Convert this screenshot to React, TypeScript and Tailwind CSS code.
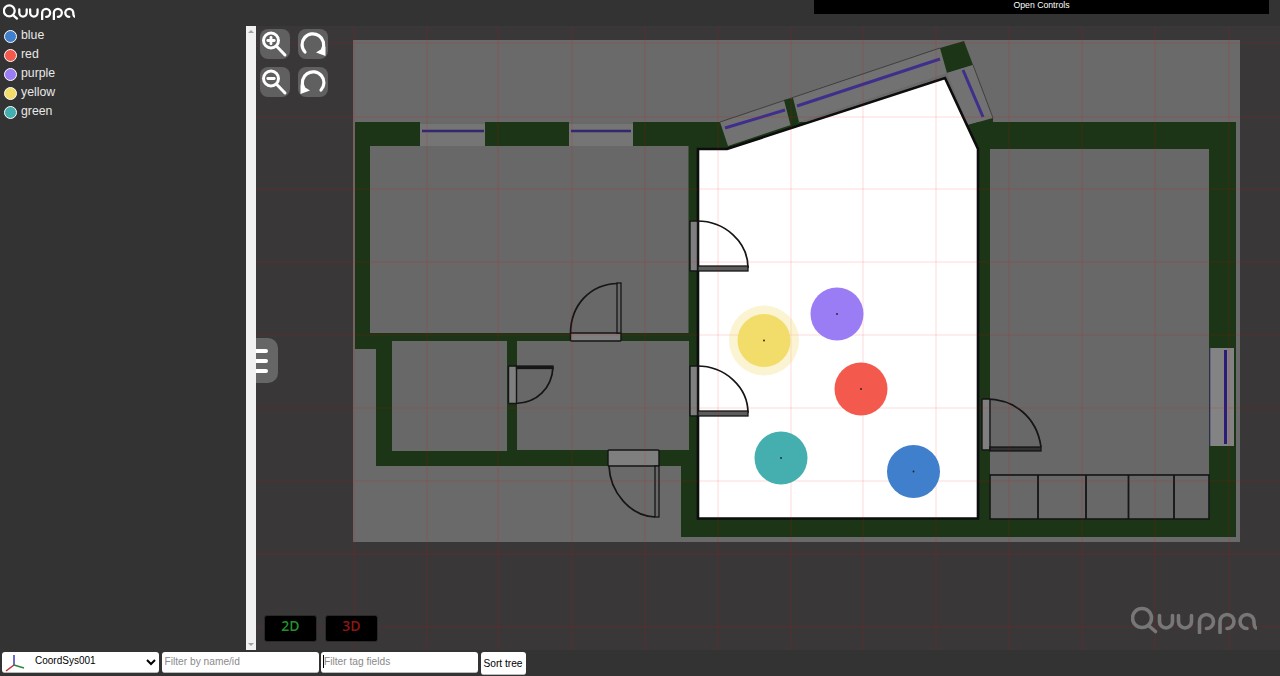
import React from "react";

const SANS = "font-['Liberation_Sans',Arial,sans-serif]";

const tags = [
  { name: "blue", legend: "bg-[#3f7fcb]" },
  { name: "red", legend: "bg-[#f4594e]" },
  { name: "purple", legend: "bg-[#9a7cf5]" },
  { name: "yellow", legend: "bg-[#f2dc6a]" },
  { name: "green", legend: "bg-[#45aeae]" },
];

function Logo({ className, color, weight }: { className: string; color: string; weight: number }) {
  return (
    <svg viewBox="0 0 126 28" className={className} fill="none" stroke={color} strokeWidth={weight} strokeLinecap="round">
      <circle cx="11" cy="12" r="9.500" />
      <path d="M17.500 19.500L24.500 25.500" />
      <path d="M28.500 9.500V15.500a6.500 6.500 0 0 0 13 0V9.500" />
      <path d="M47.500 9.500V15.500a6.500 6.500 0 0 0 13 0V9.500" />
      <path d="M68.500 26.500V15.500a7 7 0 1 1 7 7" />
      <path d="M89 26.500V15.500a7 7 0 1 1 7 7" />
      <path d="M116 22.500a7 7 0 1 1 7-7q0 5.500 2 6.500" />
    </svg>
  );
}

function ZoomIcon({ plus }: { plus: boolean }) {
  return (
    <svg viewBox="0 0 30 30" className="w-[30px] h-[30px]" fill="none" stroke="white" strokeLinecap="round">
      <circle cx="11" cy="11.500" r="7.500" strokeWidth="3" />
      <path d="M16.800 17.500L25 26" strokeWidth="3" />
      <path d="M7.800 11.500H14.200" strokeWidth="2.800" />
      {plus && <path d="M11 8.300V14.700" strokeWidth="2.800" />}
    </svg>
  );
}

function RotateIcon({ flip }: { flip: boolean }) {
  return (
    <svg viewBox="0 0 30 30" className={`w-[30px] h-[30px] ${flip ? "-scale-x-100" : ""}`} fill="none" stroke="white" strokeWidth="3.200" strokeLinecap="round">
      <path d="M7 23A10.800 10.800 0 1 1 24.500 20.500" />
      <path d="M18 23.500L27.500 27L27.500 17.500Z" fill="white" stroke="none" />
    </svg>
  );
}

function Door({ frame, leaf, arc, leafFill }: { frame: number[]; leaf: number[]; arc: string; leafFill?: string }) {
  return (
    <g>
      <path d={arc} fill="none" stroke="#141414" strokeWidth="1.700" />
      <rect x={frame[0]} y={frame[1]} width={frame[2]} height={frame[3]} rx="1" fill="#7f7f7f" stroke="#141414" strokeWidth="1.400" />
      <rect x={leaf[0]} y={leaf[1]} width={leaf[2]} height={leaf[3]} fill={leafFill ?? "#5c5c5c"} stroke="#141414" strokeWidth="1.300" />
    </g>
  );
}

function FloorPlan() {
  const vertical = [354, 427, 498, 572, 645, 718, 791, 863, 936, 1009, 1082, 1155, 1229];
  const horizontal = [43, 117, 189, 262, 335, 408, 481, 554, 627];
  const GREEN = "#1a3616";
  const GRAY = "#686868";
  const dots = [
    { cx: 913.5, cy: 471.5, fill: "#3f7fcb" },
    { cx: 861, cy: 389, fill: "#f4594e" },
    { cx: 837, cy: 314, fill: "#9a7cf5" },
    { cx: 781, cy: 458, fill: "#45aeae" },
  ];
  return (
    <svg viewBox="256 26 1024 624" className="absolute inset-0 w-full h-full">
      <defs>
        <filter id="soft" x="-2%" y="-2%" width="104%" height="104%">
          <feGaussianBlur stdDeviation="0.45" />
        </filter>
      </defs>
      <g filter="url(#soft)">
        <rect x="353" y="40" width="887" height="502" fill="#6a6a6a" />
        <path d="M355 122H1236V537H681V466H376V349H355Z" fill={GREEN} />
        <rect x="370" y="146" width="318.500" height="187" fill={GRAY} />
        <rect x="392" y="341" width="115" height="110" fill={GRAY} />
        <rect x="517" y="341" width="172" height="109" fill={GRAY} />
        <rect x="990" y="149" width="219" height="370" fill={GRAY} />

        <rect x="420" y="122" width="65" height="24" fill="#747474" />
        <rect x="569" y="122" width="64" height="24" fill="#747474" />
        <path d="M422 131H484M571 131H631" stroke="#35256f" strokeWidth="2.400" />
        <path d="M420 123H485M569 123H633" stroke="#555" strokeWidth="0.800" />

        <path d="M720 122L940 48L947 73L728 146Z" fill="#727272" />
        <path d="M720 122L940 48" stroke="#333" strokeWidth="0.800" />
        <path d="M725 128L785 110M797 106L940 59" stroke="#3f2f8c" strokeWidth="3" />
        <path d="M784 100L793 98L799 122L791 127Z" fill={GREEN} />
        <path d="M940 48L964 41L973 65L947 73Z" fill={GREEN} />
        <path d="M947 73L973 65L993 118L968 125Z" fill="#727272" />
        <path d="M973 65L993 118" stroke="#333" strokeWidth="0.800" />
        <path d="M963 70L983 117" stroke="#3f2f8c" strokeWidth="3" />
        <path d="M968 125L993 118V149H978Z" fill={GREEN} />

        <path d="M698 149H727L945 78L978 149V518.500H698Z" fill="white" stroke="#0a0a0a" strokeWidth="2.600" />

        <Door frame={[690, 221, 7.500, 50]} leaf={[698, 266, 50, 5]} arc="M697 221A51 47 0 0 1 748 268" />
        <Door frame={[690, 366, 7.500, 50]} leaf={[698, 411, 50, 5]} arc="M697 366A51 47 0 0 1 748 413" />
        <Door frame={[570.500, 333, 50.500, 8]} leaf={[617, 283, 4, 50]} arc="M618 283.500C590 284 571 305 570.500 333" leafFill="#686868" />
        <Door frame={[508.500, 366, 8, 37.500]} leaf={[516.500, 366, 36.500, 2.500]} arc="M553 367C552 388 537 403 516 403.500" leafFill="#1a1a1a" />
        <Door frame={[608, 450, 51, 16]} leaf={[655, 466, 4, 51]} arc="M609 466C610 492 630 516 655 517" leafFill="#686868" />
        <Door frame={[982, 399, 8, 51]} leaf={[990, 447, 51, 4]} arc="M983 399C1015 398 1037 418 1041 447" leafFill="#333333" />

        <rect x="1210" y="348" width="24" height="98" fill="#838383" />
        <path d="M1210 348V446" stroke="#3f2f8c" strokeWidth="0.700" />
        <path d="M1225.500 350V444" stroke="#2a1f78" strokeWidth="3" />

        <rect x="990" y="475" width="219" height="44" fill={GRAY} stroke="#141414" strokeWidth="1.600" />
        <path d="M1038 475V519M1086 475V519M1128.500 475V519M1174 475V519" stroke="#141414" strokeWidth="1.800" />
      </g>

      {vertical.map((x) => (
        <line key={x} x1={x} x2={x} y1="26" y2="650" stroke="#ff0000" strokeOpacity="0.14" />
      ))}
      {horizontal.map((y) => (
        <line key={y} x1="256" x2="1280" y1={y} y2={y} stroke="#ff0000" strokeOpacity="0.14" />
      ))}

      <circle cx="764" cy="340.500" r="35" fill="#f2dc6a" fillOpacity="0.3" />
      <circle cx="764" cy="340.500" r="26.500" fill="#f2dc6a" />
      <circle cx="764" cy="340.500" r="0.900" fill="#222" />
      {dots.map((d) => (
        <g key={d.cx}>
          <circle cx={d.cx} cy={d.cy} r="26.500" fill={d.fill} />
          <circle cx={d.cx} cy={d.cy} r="0.900" fill="#222" />
        </g>
      ))}
    </svg>
  );
}

export default function App() {
  return (
    <div className={`h-screen w-screen overflow-hidden flex flex-col bg-[#333333] ${SANS}`}>
      <header className="h-[26px] shrink-0 flex items-start">
        <div className="pl-[3px] pt-[4px]">
          <Logo className="block w-[72px] h-[16px]" color="white" weight={4} />
        </div>
        <div className="ml-auto mr-[11px] w-[455px] h-[14px] bg-black text-white text-[8.700px] leading-[11px] text-center">Open Controls</div>
      </header>

      <div className="flex flex-1 min-h-0">
        <aside className="w-[246px] shrink-0 pl-[4px] pt-[1px]">
          <ul className="flex flex-col">
            {tags.map((t) => (
              <li key={t.name} className="h-[19px] flex items-center gap-[4px]">
                <span className={`w-[13px] h-[13px] rounded-full border border-white ${t.legend}`} />
                <span className="text-[12.300px] text-[#e8e8e8] leading-none mb-[2px]">{t.name}</span>
              </li>
            ))}
          </ul>
        </aside>

        <div className="w-[10px] shrink-0 bg-[#f1f1f1] flex flex-col justify-between items-center py-[4px]">
          <span className="w-0 h-0 border-x-[3px] border-x-transparent border-b-[3px] border-b-[#a0a0a0]" />
          <span className="w-0 h-0 border-x-[3px] border-x-transparent border-t-[3px] border-t-[#a0a0a0]" />
        </div>

        <main className="relative flex-1 bg-[#3a3738]">
          <FloorPlan />

          <div className="absolute left-[4px] top-[3px] grid grid-cols-2 gap-x-[8px] gap-y-[8px]">
            <button className="w-[30px] h-[30px] rounded-lg bg-[#606060]"><ZoomIcon plus /></button>
            <button className="w-[30px] h-[30px] rounded-lg bg-[#606060]"><RotateIcon flip={false} /></button>
            <button className="w-[30px] h-[30px] rounded-lg bg-[#606060]"><ZoomIcon plus={false} /></button>
            <button className="w-[30px] h-[30px] rounded-lg bg-[#606060]"><RotateIcon flip /></button>
          </div>

          <div className="absolute left-0 top-[312px] w-[22px] h-[45px] rounded-r-[10px] bg-[#666666] flex flex-col justify-center gap-[6px]">
            <span className="block w-[12px] h-[4px] bg-white rounded-r-sm" />
            <span className="block w-[12px] h-[4px] bg-white rounded-r-sm" />
            <span className="block w-[12px] h-[4px] bg-white rounded-r-sm" />
          </div>

          <div className="absolute left-[8px] top-[589px] flex gap-[8px]">
            <div className="w-[53px] h-[27px] rounded-[3px] bg-black border border-[#2a2a2a] text-[#22922a] text-[14px] font-semibold leading-[19px] text-center font-['Open_Sans',sans-serif]">2D</div>
            <div className="w-[53px] h-[27px] rounded-[3px] bg-black border border-[#2a2a2a] text-[#8e1616] text-[14px] font-semibold leading-[19px] text-center font-['Open_Sans',sans-serif]">3D</div>
          </div>

          <Logo className="absolute left-[875px] top-[580px] w-[126px] h-[28px]" color="#777777" weight={3.6} />
        </main>
      </div>

      <footer className="h-[26px] shrink-0 flex items-start gap-[2.500px] pl-[2px] pt-[2px]">
        <div className="relative w-[157px] h-[21px]">
          <select defaultValue="CoordSys001" className="block w-full h-full bg-white rounded-[3px] pl-[29px] pb-[3px] text-[10px] text-black border-b border-[#bbbbbb]">
            <option>CoordSys001</option>
          </select>
          <svg viewBox="0 0 20 18" className="absolute left-[3px] top-[2px] w-[20px] h-[18px]" fill="none" strokeWidth="1.500">
            <path d="M9 11V1" stroke="#3a3ac0" />
            <path d="M9 11L19 14" stroke="#2a8a3a" />
            <path d="M9 11L1 17" stroke="#c03030" />
          </svg>
        </div>
        <input placeholder="Filter by name/id" className="block w-[157px] h-[21px] bg-white rounded-[3px] px-[3px] pb-[2px] text-[10.200px] placeholder:text-[#8a8a8a] border-b border-[#bbbbbb]" />
        <div className="relative">
          <input placeholder="Filter tag fields" className="block w-[157px] h-[21px] bg-white rounded-[3px] px-[3px] pb-[2px] text-[10.200px] placeholder:text-[#8a8a8a] border-b border-[#bbbbbb]" />
          <span className="absolute left-[2px] top-[3px] w-px h-[13px] bg-black" />
        </div>
        <button className="w-[45px] h-[23px] bg-white rounded-[3px] pt-[1px] text-[10.200px] text-black border-b border-[#bbbbbb]">Sort tree</button>
      </footer>
    </div>
  );
}
